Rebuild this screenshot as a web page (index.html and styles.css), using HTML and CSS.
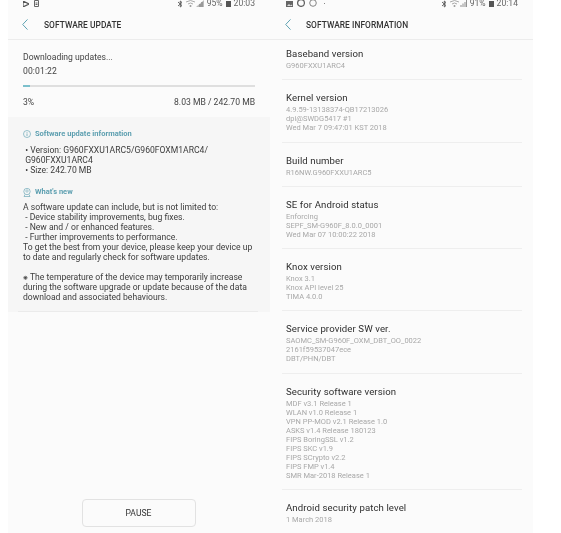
FILE: index.html
```html
<!DOCTYPE html>
<html lang="en">
<head>
<meta charset="utf-8">
<title>Software update</title>
<link rel="stylesheet" href="styles.css">
</head>
<body>
<main class="shots">
  <section class="phone phone-left">
    <div class="status">
      <div class="status-icons">
        <svg width="6" height="6" viewBox="0 0 6 6"><path d="M0 0L6 3L0 6Z" fill="none" stroke="#555" stroke-width="1.2"/></svg>
        <svg class="gap-doc" width="5" height="7" viewBox="0 0 5 7"><path d="M.5.5H4.500V6.500H.5Z M1.500 3H3.500M1.500 4.500H3.500" fill="none" stroke="#666"/></svg>
      </div>
      <div class="status-right">
        <svg width="5" height="8" viewBox="0 0 5 8"><path d="M0 2L4 5.500L2.300 7V1L4 2.500L0 6" fill="none" stroke="#555" stroke-width=".9"/></svg>
        <svg class="wifi" width="9" height="7" viewBox="0 0 9 7"><path d="M0 2Q4.500-1 9 2M2 4Q4.500 2 7 4" fill="none" stroke="#aaa"/><circle cx="4.500" cy="6" r="1" fill="#999"/></svg>
        <svg class="signal" width="8" height="7" viewBox="0 0 8 7"><path d="M0 7L8 0V7Z" fill="#bbb"/><path d="M4 7V4M6 7V2" stroke="#777"/></svg>
        <span class="pct">95%</span>
        <span class="battery"></span>
        <span>20:03</span>
      </div>
    </div>
    <header class="appbar">
      <svg class="back" width="6" height="11" viewBox="0 0 6 11"><path d="M5.500.4L.7 5.500L5.500 10.600" fill="none" stroke="#5fa3b3" stroke-width="1"/></svg>
      <h1 class="title title-update">SOFTWARE UPDATE</h1>
    </header>
    <div class="progress-block">
      <p class="line">Downloading updates...</p>
      <p class="line time">00:01:22</p>
      <div class="track"><div class="fill"></div></div>
      <div class="amounts"><span>3%</span><span>8.03 MB / 242.70 MB</span></div>
    </div>
    <div class="info-card">
      <h2 class="info-head">
        <svg width="8" height="8" viewBox="0 0 8 8"><circle cx="4" cy="4" r="3.500" fill="none" stroke="#6fa9b8" stroke-width=".7"/><path d="M4 3.400V6M4 2V2.800" stroke="#6fa9b8" stroke-width=".8"/></svg>
        Software update information
      </h2>
      <p class="info-text info-list">&nbsp;• Version: G960FXXU1ARC5/G960FOXM1ARC4/<br>&nbsp;G960FXXU1ARC4<br>&nbsp;• Size: 242.70 MB</p>
      <h2 class="info-head whats-new">
        <svg width="8" height="9" viewBox="0 0 8 9"><circle cx="4" cy="3.500" r="3.200" fill="none" stroke="#6fa9b8" stroke-width=".7"/><circle cx="4" cy="3" r="1.200" fill="none" stroke="#6fa9b8" stroke-width=".6"/><path d="M1 8.500H7M2 6.500L1 8.500M6 6.500L7 8.500" fill="none" stroke="#6fa9b8" stroke-width=".7"/></svg>
        What's new
      </h2>
      <p class="info-text">A software update can include, but is not limited to:<br>&nbsp;- Device stability improvements, bug fixes.<br>&nbsp;- New and / or enhanced features.<br>&nbsp;- Further improvements to performance.<br>To get the best from your device, please keep your device up to date and regularly check for software updates.</p>
      <p class="info-text note">⁕ The temperature of the device may temporarily increase during the software upgrade or update because of the data download and associated behaviours.</p>
    </div>
    <div class="actions"><button class="pause" type="button">PAUSE</button></div>
  </section>

  <section class="phone phone-right">
    <div class="status">
      <div class="status-icons">
        <svg width="7" height="6" viewBox="0 0 7 6"><path d="M0 0H7V6H0Z" fill="#666"/><path d="M1 5L3 3L4.500 4.500L5.500 3.500L6.500 5Z" fill="#ddd"/></svg>
        <svg class="gap-r" width="8" height="7" viewBox="0 0 8 7"><circle cx="4" cy="3" r="3.400" fill="none" stroke="#666" stroke-width="1.300"/></svg>
        <svg class="gap-r" width="8" height="7" viewBox="0 0 8 7"><circle cx="4" cy="3" r="3.300" fill="none" stroke="#777" stroke-width=".9"/></svg>
        <span class="dot"></span>
      </div>
      <div class="status-right">
        <svg width="5" height="8" viewBox="0 0 5 8"><path d="M0 2L4 5.500L2.300 7V1L4 2.500L0 6" fill="none" stroke="#555" stroke-width=".9"/></svg>
        <svg class="wifi" width="9" height="7" viewBox="0 0 9 7"><path d="M0 2Q4.500-1 9 2M2 4Q4.500 2 7 4" fill="none" stroke="#aaa"/><circle cx="4.500" cy="6" r="1" fill="#999"/></svg>
        <svg class="signal" width="7" height="7" viewBox="0 0 7 7"><path d="M1 7V5M3 7V3.500M5 7V2M6.500 7V0" stroke="#777" stroke-width=".8"/></svg>
        <span class="pct">91%</span>
        <span class="battery"></span>
        <span>20:14</span>
      </div>
    </div>
    <header class="appbar">
      <svg class="back" width="6" height="11" viewBox="0 0 6 11"><path d="M5.500.4L.7 5.500L5.500 10.600" fill="none" stroke="#5fa3b3" stroke-width="1"/></svg>
      <h1 class="title title-info">SOFTWARE INFORMATION</h1>
    </header>
    <ul class="items">
      <li class="item item-first"><h3>Baseband version</h3><p>G960FXXU1ARC4</p></li>
      <li class="item"><h3>Kernel version</h3><p>4.9.59-13138374-QB17213026<br>dpi@SWDG5417 #1<br>Wed Mar 7 09:47:01 KST 2018</p></li>
      <li class="item"><h3>Build number</h3><p>R16NW.G960FXXU1ARC5</p></li>
      <li class="item"><h3>SE for Android status</h3><p>Enforcing<br>SEPF_SM-G960F_8.0.0_0001<br>Wed Mar 07 10:00:22 2018</p></li>
      <li class="item"><h3>Knox version</h3><p>Knox 3.1<br>Knox API level 25<br>TIMA 4.0.0</p></li>
      <li class="item"><h3>Service provider SW ver.</h3><p>SAOMC_SM-G960F_OXM_DBT_OO_0022<br>2161f59537047ece<br>DBT/PHN/DBT</p></li>
      <li class="item"><h3>Security software version</h3><p>MDF v3.1 Release 1<br>WLAN v1.0 Release 1<br>VPN PP-MOD v2.1 Release 1.0<br>ASKS v1.4 Release 180123<br>FIPS BoringSSL v1.2<br>FIPS SKC v1.9<br>FIPS SCrypto v2.2<br>FIPS FMP v1.4<br>SMR Mar-2018 Release 1</p></li>
      <li class="item"><h3>Android security patch level</h3><p>1 March 2018</p></li>
    </ul>
  </section>
</main>
</body>
</html>
```
FILE: styles.css
```css
* { box-sizing: border-box; margin: 0; padding: 0; }
html, body { height: 100%; background: #fff; overflow: hidden; }
body { font-family: Roboto, "Liberation Sans", sans-serif; color: #333; }
.shots { display: flex; height: 533px; padding-left: 8px; filter: blur(.3px); }
.phone { background: #fbfbfb; display: flex; flex-direction: column; height: 533px; overflow: hidden; }
.phone > * { flex: none; }
.phone-left { width: 262px; }
.phone-right { width: 263px; }

.status { height: 8px; display: flex; justify-content: space-between; align-items: flex-start; font-size: 8.6px; line-height: 7px; color: #666; }
.phone-left .status { padding: 0 15px; }
.phone-right .status { padding: 0 15px 0 16px; }
.status-icons, .status-right { display: flex; align-items: center; height: 7px; }
.gap-doc { margin-left: 5px; }
.gap-r { margin-left: 4px; }
.dot { width: 1px; height: 1px; background: #888; margin-left: 7px; }
.wifi { margin-left: 3px; }
.signal { margin-left: 1px; }
.pct { margin-left: 3px; }
.battery { width: 5px; height: 6px; background: #555; margin: 0 3px; }

.appbar { height: 32px; display: flex; align-items: center; padding-top: 2px; border-bottom: 1px solid #ececec; }
.phone-left .appbar { padding-left: 14px; }
.phone-right .appbar { padding-left: 15px; }
.back { flex: none; }
.title { font-size: 8.4px; font-weight: 500; color: #333; line-height: 12px; letter-spacing: .05px; }
.title-update { margin-left: 16px; }
.title-info { margin-left: 15px; }

.progress-block { padding: 10px 15px 0; height: 77px; }
.line { font-size: 8.6px; line-height: 14px; color: #444; }
.time { letter-spacing: .1px; }
.track { height: 1.500px; background: #dfdfdf; margin-top: 7px; }
.fill { width: 3%; height: 100%; background: #7cc0cc; }
.amounts { display: flex; justify-content: space-between; font-size: 8.6px; line-height: 12px; color: #444; margin-top: 9.500px; }

.info-card { background: #f6f6f6; height: 195px; padding: 12px 15px 0; position: relative; }
.info-card::after { content: ""; position: absolute; left: 10px; right: 12px; bottom: 0; height: 1px; background: #ebebeb; }
.info-head { display: flex; align-items: center; gap: 4px; font-size: 7.5px; font-weight: 700; line-height: 10px; color: #5d9fb0; }
.info-list { margin-top: 6px; line-height: 10.4px; }
.whats-new { margin-top: 12px; }
.info-text { font-size: 8.6px; line-height: 10px; color: #3c3c3c; }
.whats-new + .info-text { margin-top: 5px; }
.note { margin-top: 10px; }

.actions { flex: 1 !important; display: flex; justify-content: center; align-items: flex-end; padding: 0 0 6px 16px; }
.pause { width: 114px; height: 28px; background: #fbfbfb; border: 1px solid #e2e2e2; border-radius: 4px; font-family: inherit; font-size: 8.6px; color: #333; margin-right: 17px; }

.items { list-style: none; padding: 0 11px 0 12px; }
.item { padding: 11px 4px 9.300px; border-bottom: 1px solid #eeeeee; }
.item:last-child { border-bottom: 0; }
.item-first { padding-top: 7px; }
.item h3 { font-size: 9.6px; font-weight: 400; line-height: 14px; color: #2e2e2e; letter-spacing: .1px; }
.item p { font-size: 7.5px; line-height: 9px; color: #a8a8a8; }
```
